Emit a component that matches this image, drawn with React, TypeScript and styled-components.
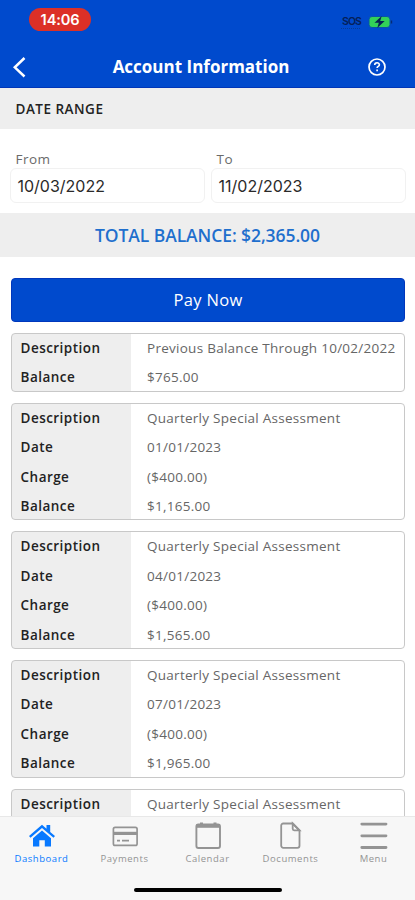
import React from "react";
import styled, { createGlobalStyle } from "styled-components";

const Global = createGlobalStyle`
  * { box-sizing: border-box; }
  body { margin: 0; background: #fff; font-family: "Open Sans", "Noto Sans", sans-serif; }
`;

const Screen = styled.div`
  width: 415px;
  height: 900px;
  display: flex;
  flex-direction: column;
  overflow: hidden;
  background: #fff;
`;

const Header = styled.header`
  flex: none;
  height: 88px;
  background: #004acd;
  border-bottom: 1px solid #0036b8;
`;

const StatusBar = styled.div`
  height: 46px;
  padding: 8px 22px 0 29px;
  display: flex;
  justify-content: space-between;
  align-items: flex-start;
`;

const Clock = styled.div`
  width: 62px;
  height: 23px;
  border-radius: 12px;
  background: #dc3027;
  color: #fff;
  font: 600 14.6px/24px Inter, sans-serif;
  letter-spacing: -0.15px;
  text-align: center;
`;

const Signals = styled.div`
  display: flex;
  align-items: center;
  gap: 7px;
  padding-top: 6px;
`;

const Sos = styled.span`
  color: #052059;
  font: 600 10.5px/16px Inter, sans-serif;
  letter-spacing: -0.9px;
  text-decoration: underline dotted #063a98 1px;
  text-underline-offset: 3px;
`;

const TitleBar = styled.div`
  height: 41px;
  padding: 0 29px 0 12px;
  display: grid;
  grid-template-columns: 18px 1fr 18px;
  align-items: center;
`;

const Title = styled.h1`
  margin: 1px 0 0 4px;
  color: #fff;
  font-size: 17px;
  line-height: 24px;
  font-weight: 700;
  text-align: center;
`;

const SectionBar = styled.div`
  flex: none;
  height: 41px;
  padding-left: 15.5px;
  background: #eee;
  color: #222;
  font-size: 13.5px;
  line-height: 42px;
  font-weight: 600;
  letter-spacing: 0.5px;
`;

const Dates = styled.div`
  flex: none;
  height: 84px;
  padding: 22px 9px 0 10px;
  display: grid;
  grid-template-columns: 195px 195px;
  justify-content: space-between;
`;

const FieldLabel = styled.label`
  display: block;
  height: 17px;
  padding-left: 5.5px;
  color: #6a6a6a;
  font-size: 13.5px;
  line-height: 17px;
  letter-spacing: 0.5px;
`;

const FieldBox = styled.div`
  height: 35px;
  padding-left: 6.5px;
  border: 1px solid #f1f1f1;
  border-radius: 6px;
  color: #2a2a2a;
  font: 400 16px/34px Inter, sans-serif;
  letter-spacing: 0;
`;

const Total = styled.div`
  flex: none;
  height: 44px;
  background: #eee;
  color: #1f6fcd;
  font-size: 17.5px;
  line-height: 45px;
  font-weight: 600;
  letter-spacing: -0.08px;
  text-align: center;
`;

const PayButton = styled.button`
  flex: none;
  height: 44px;
  margin: 21px 10px 0 11px;
  padding: 0;
  border: 1px solid #0037bc;
  border-radius: 4px;
  background: #004acd;
  color: #fff;
  font: 500 16.5px/42px "Open Sans", sans-serif;
  letter-spacing: 0.35px;
`;

const Ledger = styled.main`
  flex: 1;
  min-height: 0;
  overflow: hidden;
  padding: 11px 10px 0 11px;
  display: flex;
  flex-direction: column;
  gap: 11px;
`;

const Card = styled.dl<{ $rows: number }>`
  flex: none;
  height: ${(p) => p.$rows * 29.4}px;
  margin: 0;
  border: 1px solid #c8c8c8;
  border-radius: 4px;
  background: linear-gradient(to right, #eee 119px, #fff 119px);
`;

const Row = styled.div`
  height: 29.4px;
  display: grid;
  grid-template-columns: 119px 1fr;
  font-size: 13.5px;
  line-height: 29px;
  white-space: nowrap;
`;

const Term = styled.dt`
  padding-left: 8.6px;
  color: #222;
  font-weight: 600;
  letter-spacing: 0.45px;
`;

const Value = styled.dd`
  margin: 0;
  padding-left: 16px;
  color: #666;
  letter-spacing: 0.27px;
`;

const TabBar = styled.nav`
  flex: none;
  height: 84px;
  padding-top: 4px;
  background: #f7f7f7;
  border-top: 1px solid #e8e8e8;
`;

const Tabs = styled.div`
  height: 67px;
  display: grid;
  grid-template-columns: repeat(5, 83px);
`;

const Tab = styled.div<{ $active?: boolean }>`
  display: flex;
  flex-direction: column;
  align-items: center;
  color: ${(p) => (p.$active ? "#0879ff" : "#949494")};
  font-size: 9.5px;
  line-height: 16px;
  letter-spacing: 0.55px;
  white-space: nowrap;
  svg { display: block; height: 30px; flex: none; }
`;

const HomeBar = styled.div`
  width: 148px;
  height: 4px;
  margin: 0 auto;
  border-radius: 2px;
  background: #000;
`;

const entries: [string, string][][] = [
  [["Description", "Previous Balance Through 10/02/2022"], ["Balance", "$765.00"]],
  ...[["01/01/2023", "$1,165.00"], ["04/01/2023", "$1,565.00"], ["07/01/2023", "$1,965.00"]].map(
    ([date, balance]): [string, string][] => [
      ["Description", "Quarterly Special Assessment"],
      ["Date", date],
      ["Charge", "($400.00)"],
      ["Balance", balance],
    ],
  ),
  [["Description", "Quarterly Special Assessment"]],
];

const HomeIcon = () => (
  <svg width="30" height="30" viewBox="0 0 30 30" fill="currentColor">
    <path d="M2 15 15 3.8l4.5 3.9V4h3.7v7l4.8 4-1.5 1.8L15 6.9 3.5 16.8z" />
    <path d="M6 17.2 15 9.5l9 7.7v8.4h-6.2v-6.4h-5.5v6.4H6z" />
  </svg>
);

const CardIcon = () => (
  <svg width="30" height="30" viewBox="0 0 30 30" fill="none" stroke="currentColor">
    <rect x="3.4" y="6.4" width="23.7" height="18" rx="1.7" strokeWidth="1.7" />
    <path d="M3.5 12.4h23.5" strokeWidth="3.2" />
    <path d="M7 19.6h3M12 19.6h7" strokeWidth="1.6" />
  </svg>
);

const CalendarIcon = () => (
  <svg width="30" height="30" viewBox="0 0 30 30" fill="none" stroke="currentColor">
    <rect x="3.4" y="3.4" width="23.6" height="23.6" rx="2" strokeWidth="1.9" />
    <path d="M3.4 5h23.6" strokeWidth="3.6" />
    <path d="M8.5 3.4V1.6M22 3.4V1.6" strokeWidth="3" />
  </svg>
);

const DocumentIcon = () => (
  <svg width="30" height="30" viewBox="0 0 30 30" fill="none" stroke="currentColor" strokeWidth="1.8">
    <path d="M7.2 2.5h9.5l6.8 6.8v15.5a2 2 0 0 1-2 2H7.2a2 2 0 0 1-2-2V4.5a2 2 0 0 1 2-2z" />
    <path d="M16.7 2.5v5.3c0 .8.7 1.5 1.5 1.5h5.3z" />
  </svg>
);

const MenuIcon = () => (
  <svg width="30" height="30" viewBox="0 0 30 30" fill="none" stroke="currentColor" strokeWidth="2.8" strokeLinecap="round">
    <path d="M2.8 3.1h24.2M2.8 14.8h24.2M2.8 26.5h24.2" />
  </svg>
);

const tabs = [
  { label: "Dashboard", Icon: HomeIcon },
  { label: "Payments", Icon: CardIcon },
  { label: "Calendar", Icon: CalendarIcon },
  { label: "Documents", Icon: DocumentIcon },
  { label: "Menu", Icon: MenuIcon },
];

export default function App() {
  return (
    <>
      <Global />
      <Screen>
        <Header>
          <StatusBar>
            <Clock>14:06</Clock>
            <Signals>
              <Sos>SOS</Sos>
              <svg width="25" height="14" viewBox="0 0 25 14">
                <rect x="1" y="1.5" width="21" height="11" rx="3" fill="#32d158" stroke="#0754a5" />
                <path d="M23.5 5.5v3" stroke="#062a75" strokeWidth="1.4" />
                <path d="M13.7 1 6.5 7.8h4.3L9.3 13l7.4-7h-4.5z" fill="#062253" />
              </svg>
            </Signals>
          </StatusBar>
          <TitleBar>
            <svg width="18" height="24" viewBox="0 0 18 24" fill="none" stroke="#fff" strokeWidth="2.5">
              <path d="m12.5 3-9.7 9.3 9.7 9.2" />
            </svg>
            <Title>Account Information</Title>
            <svg width="18" height="18" viewBox="0 0 18 18" fill="none" stroke="#fff">
              <circle cx="9" cy="9" r="8" strokeWidth="1.7" />
              <path d="M6.7 7.1c0-3 4.7-3 4.7-.3 0 1.7-2.3 1.5-2.3 3.3M9.1 11.6v1.7" strokeWidth="1.6" />
            </svg>
          </TitleBar>
        </Header>
        <SectionBar>DATE RANGE</SectionBar>
        <Dates>
          <div>
            <FieldLabel>From</FieldLabel>
            <FieldBox>10/03/2022</FieldBox>
          </div>
          <div>
            <FieldLabel>To</FieldLabel>
            <FieldBox>11/02/2023</FieldBox>
          </div>
        </Dates>
        <Total>TOTAL BALANCE: $2,365.00</Total>
        <PayButton>Pay Now</PayButton>
        <Ledger>
          {entries.map((rows, i) => (
            <Card key={i} $rows={Math.max(rows.length, i === 0 ? 2 : 4)}>
              {rows.map(([term, value]) => (
                <Row key={term}>
                  <Term>{term}</Term>
                  <Value>{value}</Value>
                </Row>
              ))}
            </Card>
          ))}
        </Ledger>
        <TabBar>
          <Tabs>
            {tabs.map(({ label, Icon }) => (
              <Tab key={label} $active={label === "Dashboard"}>
                <Icon />
                {label}
              </Tab>
            ))}
          </Tabs>
          <HomeBar />
        </TabBar>
      </Screen>
    </>
  );
}
